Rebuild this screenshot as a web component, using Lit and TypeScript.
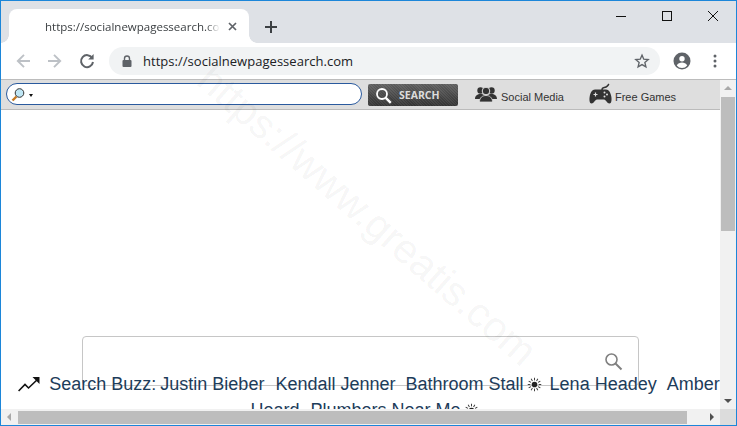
import { LitElement, html, css, svg } from "lit";
import { customElement } from "lit/decorators.js";

const sun = html`<svg class="sun" viewBox="0 0 16 16" aria-hidden="true">
  <circle cx="8" cy="8" r="3" fill="#222"/>
  <g stroke="#333" stroke-width="1" fill="none">
    ${[0, 30, 60, 90, 120, 150, 180, 210, 240, 270, 300, 330].map(
      (a) => svg`<line x1="8" y1="3.600" x2="8" y2="0.800" transform="rotate(${a} 8 8)"/>`
    )}
  </g>
</svg>`;

@customElement("app-root")
export class AppRoot extends LitElement {
  static styles = css`
    :host {
      display: block;
      width: 737px;
      height: 426px;
      overflow: hidden;
      font-family: "Liberation Sans", Arial, sans-serif;
    }
    .window {
      position: relative;
      box-sizing: border-box;
      width: 737px;
      height: 426px;
      border: 1px solid #1c86d9;
      display: flex;
      flex-direction: column;
      background: #fff;
      overflow: hidden;
    }
    .titlebar {
      height: 42px;
      flex: none;
      background: #dee1e6;
      display: flex;
      align-items: flex-end;
      padding-left: 8px;
    }
    .tab {
      position: relative;
      box-sizing: border-box;
      width: 240px;
      height: 34px;
      background: #fff;
      border-radius: 8px 8px 0 0;
      display: flex;
      align-items: center;
      padding: 0 12px 0 36px;
      font: 11.500px "Open Sans", "Noto Sans", sans-serif;
      color: #3c4043;
    }
    .tab::before,
    .tab::after {
      content: "";
      position: absolute;
      bottom: 0;
      width: 8px;
      height: 8px;
    }
    .tab::before {
      left: -8px;
      background: radial-gradient(circle at 0 0, transparent 7.500px, #fff 8px);
    }
    .tab::after {
      right: -8px;
      background: radial-gradient(circle at 100% 0, transparent 7.500px, #fff 8px);
    }
    .tab-label {
      flex: 1;
      min-width: 0;
      white-space: nowrap;
      overflow: hidden;
      -webkit-mask-image: linear-gradient(to right, #000 92%, transparent);
      mask-image: linear-gradient(to right, #000 92%, transparent);
    }
    .tab-close {
      width: 9px;
      height: 9px;
      margin-left: 8px;
      flex: none;
    }
    .newtab {
      width: 14px;
      height: 14px;
      margin: 0 0 9px 15px;
      flex: none;
    }
    .winbtns {
      margin-left: auto;
      align-self: flex-start;
      display: flex;
    }
    .winbtns svg {
      display: block;
      width: 46px;
      height: 30px;
    }
    .toolbar {
      height: 37px;
      flex: none;
      background: #fff;
      display: flex;
      align-items: center;
      padding-left: 14px;
      border-bottom: 1px solid #bcbcbc;
      box-sizing: border-box;
    }
    .nav {
      width: 18px;
      height: 18px;
      margin-right: 14px;
      flex: none;
    }
    .nav.reload { margin-right: 12px; }
    .omni {
      box-sizing: border-box;
      width: 551px;
      height: 28px;
      border-radius: 14px;
      background: #f1f3f4;
      display: flex;
      align-items: center;
      padding: 0 10px 0 13px;
      font: 13px "Open Sans", "Noto Sans", sans-serif;
      letter-spacing: 0.03px;
      color: #202124;
    }
    .lock { width: 11px; height: 14px; margin-right: 10px; flex: none; }
    .url { flex: 1; white-space: nowrap; }
    .star { width: 16px; height: 16px; flex: none; }
    .avatar { width: 18px; height: 18px; margin-left: 13px; flex: none; }
    .dots { width: 4px; height: 14px; margin-left: 22px; flex: none; }

    .viewport {
      flex: 1;
      min-height: 0;
      display: grid;
      grid-template-columns: 1fr 16px;
      grid-template-rows: 1fr 16px;
    }
    .page {
      min-width: 0;
      min-height: 0;
      overflow: hidden;
    }
    .bar {
      box-sizing: border-box;
      height: 30px;
      background: #dedede;
      border-bottom: 1px solid #bbb;
      display: flex;
      align-items: center;
      padding-left: 5px;
      font-size: 11px;
      color: #333;
    }
    .finder {
      box-sizing: border-box;
      width: 356px;
      height: 22px;
      background: #fff;
      border: 1px solid #2a5a9e;
      border-radius: 11px;
      display: flex;
      align-items: center;
      padding-left: 4px;
      margin-top: -1px;
    }
    .mag { width: 14px; height: 15px; flex: none; }
    .caret {
      width: 0;
      height: 0;
      margin: 2px 0 0 4px;
      border-left: 2.500px solid transparent;
      border-right: 2.500px solid transparent;
      border-top: 3px solid #111;
    }
    .go {
      box-sizing: border-box;
      width: 90px;
      height: 22px;
      margin-left: 6px;
      margin-top: 1px;
      border-radius: 2px;
      background:
        repeating-linear-gradient(45deg, rgba(255, 255, 255, 0.05) 0 1px, rgba(0, 0, 0, 0.05) 1px 2px),
        linear-gradient(#626262, #363636);
      color: #dcdcdc;
      font: bold 10.500px "Open Sans", sans-serif;
      display: flex;
      align-items: center;
      padding-left: 7px;
    }
    .go svg { width: 17px; height: 17px; margin-right: 7px; }
    .link { display: flex; align-items: center; white-space: nowrap; }
    .social { margin-left: 17px; margin-top: 4px; }
    .social svg { width: 22px; height: 16px; margin-right: 4px; margin-top: -6px; }
    .games { margin-left: 25px; margin-top: 5px; }
    .games svg { width: 24px; height: 22px; margin-right: 2px; margin-top: -7px; }

    .hero {
      position: relative;
      box-sizing: border-box;
      width: 557px;
      height: 50px;
      margin: 226px 0 0 81px;
      border: 1px solid #c6c6c6;
      border-radius: 4px;
      display: flex;
      justify-content: flex-end;
      align-items: center;
      padding-right: 15px;
    }
    .hero svg { width: 19px; height: 19px; }
    .buzz {
      position: relative;
      margin: -15px -2px 0 0;
      padding-left: 15px;
      font-size: 18px;
      line-height: 26px;
      color: #1d3c5a;
      text-align: center;
    }
    .buzz span { margin-right: 6px; }
    .buzz span.lead { margin-right: 4px; }
    .buzz span.tight { margin-right: 5px; }
    .buzz span.last { margin-right: 12px; }
    .trend {
      width: 22px;
      height: 16px;
      vertical-align: -2px;
      margin-right: 9px;
    }
    .sun { width: 15px; height: 15px; vertical-align: -2px; margin-left: 3px; margin-right: -3px; }

    .vscroll {
      background: #f1f1f1;
      display: flex;
      flex-direction: column;
      align-items: center;
    }
    .thumb-v {
      width: 14px;
      height: 134px;
      margin: 1px 0 auto;
      background: #bdbdbd;
    }
    .arrow { width: 0; height: 0; flex: none; }
    .up {
      margin-top: 6px;
      margin-bottom: 6px;
      border-left: 4px solid transparent;
      border-right: 4px solid transparent;
      border-bottom: 4px solid #a8a8a8;
    }
    .down {
      margin-bottom: 6px;
      border-left: 4px solid transparent;
      border-right: 4px solid transparent;
      border-top: 4px solid #505050;
    }
    .hscroll {
      background: #f1f1f1;
      display: flex;
      align-items: center;
      padding: 0 6px 0 6px;
    }
    .left {
      border-top: 4px solid transparent;
      border-bottom: 4px solid transparent;
      border-right: 4px solid #a8a8a8;
    }
    .thumb-h {
      height: 13px;
      flex: 1;
      margin: 0 23px 0 7px;
      background: #bdbdbd;
    }
    .right {
      border-top: 4px solid transparent;
      border-bottom: 4px solid transparent;
      border-left: 4px solid #505050;
    }
    .corner { background: #dcdcdc; }
    .mark {
      position: absolute;
      left: 150px;
      top: 189px;
      font-size: 41px;
      line-height: 50px;
      white-space: nowrap;
      color: rgba(0, 0, 0, 0.055);
      transform: rotate(41deg);
      transform-origin: 50% 50%;
      pointer-events: none;
    }
  `;

  render() {
    return html`<div class="window">
      <div class="titlebar">
        <div class="tab">
          <span class="tab-label">https://socialnewpagessearch.com</span>
          <svg class="tab-close" viewBox="0 0 9 9"><path d="M1 1l7 7M8 1l-7 7" stroke="#5f6368" stroke-width="1.700"/></svg>
        </div>
        <svg class="newtab" viewBox="0 0 14 14"><path d="M7 1v12M1 7h12" stroke="#3c4043" stroke-width="2"/></svg>
        <div class="winbtns">
          <svg viewBox="0 0 46 30"><path d="M18 15.500h10" stroke="#111" stroke-width="1"/></svg>
          <svg viewBox="0 0 46 30"><rect x="18.500" y="10.500" width="9" height="9" fill="none" stroke="#111"/></svg>
          <svg viewBox="0 0 46 30"><path d="M18 10l10 10M28 10l-10 10" stroke="#111" stroke-width="1"/></svg>
        </div>
      </div>
      <div class="toolbar">
        <svg class="nav" viewBox="0 0 18 18"><path d="M15 9H2.800M9 2.800L2.800 9 9 15.200" fill="none" stroke="#bdc1c6" stroke-width="1.900"/></svg>
        <svg class="nav" viewBox="0 0 18 18"><path d="M1 9h12.200M7 2.800L13.200 9 7 15.200" fill="none" stroke="#bdc1c6" stroke-width="1.900"/></svg>
        <svg class="nav reload" viewBox="0 0 18 18"><path d="M13.200 6A6 6 0 1 0 14 10" fill="none" stroke="#5f6368" stroke-width="2"/><path d="M14.600 2v5.400H9.200z" fill="#5f6368"/></svg>
        <div class="omni">
          <svg class="lock" viewBox="0 0 11 14"><path d="M2.500 6V4.500a2.500 2.500 0 0 1 5 0V6" fill="none" stroke="#5f6368" stroke-width="1.400"/><rect x="0.500" y="6" width="9" height="7" rx="1" fill="#5f6368"/></svg>
          <span class="url">https://socialnewpagessearch.com</span>
          <svg class="star" viewBox="0 0 18 18"><path d="M9 2.400l2 4.600 5 .4-3.800 3.300 1.200 4.900L9 13l-4.400 2.600 1.200-4.900L2 7.400l5-.4z" fill="none" stroke="#5f6368" stroke-width="1.500"/></svg>
        </div>
        <svg class="avatar" viewBox="0 0 18 18"><circle cx="9" cy="9" r="8.500" fill="#5f6368"/><circle cx="9" cy="6.800" r="2.700" fill="#fff"/><path d="M3.800 13.400c1-2 3.200-2.800 5.200-2.800s4.200.8 5.200 2.800A6.600 6.600 0 0 1 9 16a6.600 6.600 0 0 1-5.200-2.600z" fill="#fff"/></svg>
        <svg class="dots" viewBox="0 0 4 14"><circle cx="2" cy="2" r="1.500" fill="#5f6368"/><circle cx="2" cy="7" r="1.500" fill="#5f6368"/><circle cx="2" cy="12" r="1.500" fill="#5f6368"/></svg>
      </div>
      <div class="viewport">
        <div class="page">
          <div class="bar">
            <div class="finder">
              <svg class="mag" viewBox="0 0 14 15"><path d="M5.500 9.500L1.500 13.500" stroke="#c77a22" stroke-width="2.400"/><circle cx="8.500" cy="6" r="4.300" fill="#bfe6f5" stroke="#333" stroke-width="1"/></svg>
              <span class="caret"></span>
            </div>
            <div class="go">
              <svg viewBox="0 0 17 17"><circle cx="7" cy="7" r="5" fill="none" stroke="#fff" stroke-width="1.800"/><path d="M10.800 10.800l5 5" stroke="#fff" stroke-width="2.400"/></svg>
              SEARCH
            </div>
            <div class="link social">
              <svg viewBox="0 0 22 16"><g fill="#333"><circle cx="5.500" cy="4.500" r="3.200"/><circle cx="16.500" cy="4.500" r="3.200"/><path d="M0 13c0-3.500 2.500-5 5.500-5s5.500 1.500 5.500 5zM11 13c0-3.500 2.500-5 5.500-5s5.500 1.500 5.500 5z"/></g><circle cx="11" cy="5" r="3.800" fill="#333" stroke="#dedede"/><path d="M4.500 16c0-4.500 3-6.500 6.500-6.500s6.500 2 6.500 6.500z" fill="#333" stroke="#dedede" stroke-width=".8"/></svg>
              Social Media
            </div>
            <div class="link games">
              <svg viewBox="0 0 24 22"><path d="M13 7c0-3 2-2 4-3s2-2 3-3" fill="none" stroke="#333" stroke-width="1.500"/><path d="M6 6.500h11c3 0 4.500 3 5.300 7 .6 3.500.2 7-1.800 7-2.500 0-3.500-4-5.500-4H8c-2 0-3 4-5.500 4-2 0-2.400-3.500-1.800-7C1.500 9.500 3 6.500 6 6.500z" fill="#333"/><path d="M4.500 11.500h4M6.500 9.500v4" stroke="#dedede" stroke-width="1.200"/><circle cx="15.500" cy="9.500" r="1" fill="#dedede"/><circle cx="18" cy="11.500" r="1" fill="#dedede"/><circle cx="15.500" cy="13.500" r="1" fill="#dedede"/></svg>
              Free Games
            </div>
          </div>
          <div class="hero">
            <svg viewBox="0 0 19 19"><circle cx="7.500" cy="7.500" r="5.500" fill="none" stroke="#808080" stroke-width="1.600"/><path d="M11.500 11.500l6 6" stroke="#808080" stroke-width="2"/></svg>
          </div>
          <div class="buzz">
            <svg class="trend" viewBox="0 0 22 16"><path d="M.6 15L7 8.500l3.500 3.500L20 3" fill="none" stroke="#111" stroke-width="1.600"/><path d="M14.500 1H21.500V8z" fill="#111"/></svg><span class="lead">Search Buzz:</span><span>Justin Bieber</span> <span class="tight">Kendall Jenner</span> <span>Bathroom Stall${sun}</span> <span>Lena Headey</span> <span>Amber Heard</span> <span class="last">Plumbers Near Me${sun}</span>
          </div>
        </div>
        <div class="vscroll">
          <span class="arrow up"></span>
          <div class="thumb-v"></div>
          <span class="arrow down"></span>
        </div>
        <div class="hscroll">
          <span class="arrow left"></span>
          <div class="thumb-h"></div>
          <span class="arrow right"></span>
        </div>
        <div class="corner"></div>
      </div>
      <div class="mark">https://www.greatis.com</div>
    </div>`;
  }
}
